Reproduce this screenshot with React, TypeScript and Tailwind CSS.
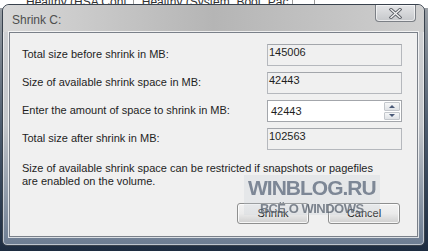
import React from 'react';

const font = { fontFamily: '"Liberation Sans", Arial, sans-serif' };

const rows = [
  { label: 'Total size before shrink in MB:', value: '145006' },
  { label: 'Size of available shrink space in MB:', value: '42443' },
  { label: 'Enter the amount of space to shrink in MB:', value: '42443', editable: true },
  { label: 'Total size after shrink in MB:', value: '102563' },
];

const ReadOnlyBox = ({ value }: { value: string }) => (
  <div className="h-[22px] w-[135px] border border-[#b5b8bd] border-t-[#a3a6ab] bg-[#f0f0f0] px-[1px] leading-[15px]">
    {value}
  </div>
);

const SpinBox = ({ value }: { value: string }) => (
  <div className="flex h-[22px] w-[135px] border border-[#a3a6ab] bg-white">
    <div className="flex flex-1 items-center px-[3px]">{value}</div>
    <div className="flex w-[17px] flex-col gap-[1px] bg-white py-[1px] pr-[1px]">
      <div className="flex flex-1 items-center justify-center rounded-[1px] border border-[#c3c7cc] bg-gradient-to-b from-[#f6f7f8] to-[#dfe2e6]">
        <div className="h-0 w-0 border-x-[3px] border-b-[3px] border-x-transparent border-b-[#4a5a78]" />
      </div>
      <div className="flex flex-1 items-center justify-center rounded-[1px] border border-[#c3c7cc] bg-gradient-to-b from-[#f6f7f8] to-[#dfe2e6]">
        <div className="h-0 w-0 border-x-[3px] border-t-[3px] border-x-transparent border-t-[#4a5a78]" />
      </div>
    </div>
  </div>
);

const DlgButton = ({ children }: { children: React.ReactNode }) => (
  <button className="flex h-[21px] w-[72px] items-center justify-center rounded-[3px] border border-[#8e8f8f] bg-gradient-to-b from-[#f2f2f2] via-[#ebebeb] to-[#cfcfcf] text-[11px] text-[#1e1e1e] shadow-[inset_0_0_0_1px_rgba(255,255,255,0.8)]">
    {children}
  </button>
);

export default function App() {
  return (
    <div
      className="relative h-[251px] w-[428px] overflow-hidden bg-gradient-to-b from-[#9ea3a8] via-[#4d5c6e] to-[#1d2c40]"
      style={font}
    >
      {/* disk management list behind the dialog */}
      <div className="flex h-[8px] items-end gap-[8px] overflow-hidden bg-white pl-[26px] text-[12px] leading-[14px] text-[#333]">
        <div className="h-[14px] shrink-0 translate-y-[1px] border-r border-[#9a9a9a] pr-[6px]">Healthy (HSA Cont</div>
        <div className="h-[14px] shrink-0 translate-y-[1px] border-r border-[#9a9a9a] pr-[4px]">Healthy (System, Boot, Pac</div>
        <div className="h-[14px] w-[14px] shrink-0 border-r border-[#9a9a9a]" />
      </div>

      {/* dialog window */}
      <div className="absolute left-[2px] top-[4px] flex h-[242px] w-[423px] flex-col rounded-t-[7px] rounded-b-[5px] border border-[#39424d] bg-gradient-to-b from-[#d3d4d6] via-[#c3c6ca] to-[#6d7d92] shadow-[inset_0_0_0_1px_rgba(255,255,255,0.55)]">
        <div className="flex h-[27px] shrink-0 items-start justify-between rounded-t-[7px] bg-gradient-to-r from-[#d8d8d8] via-[#b5b5b5] to-[#cfcfcf] pl-[9px] pr-[8px]">
          <span className="pt-[8px] text-[12px] leading-[14px] text-[#4e4e4e]">Shrink C:</span>
          <div className="flex h-[17px] w-[41px] items-center justify-center rounded-b-[4px] border border-t-0 border-[#7b7f85] bg-gradient-to-b from-[#e4e5e7] to-[#c6c8cb] shadow-[inset_0_0_0_1px_rgba(255,255,255,0.6)]">
            <svg width="13" height="11" viewBox="0 0 13 11">
              <path d="M2 1.5 L11 9.5 M11 1.5 L2 9.5" stroke="#5d6168" strokeWidth="3.2" strokeLinecap="square" />
              <path d="M2 1.5 L11 9.5 M11 1.5 L2 9.5" stroke="#f4f4f4" strokeWidth="1.3" strokeLinecap="square" />
            </svg>
          </div>
        </div>

        <div className="relative mx-[6px] mb-[8px] flex flex-1 flex-col border border-[#7a8089] bg-[#f0f0f0] pl-[12px] pr-[15px] pt-[11px] text-[11px] text-[#1e1e1e] shadow-[0_0_0_1px_rgba(255,255,255,0.75)]">
          <div className="flex flex-col gap-[6px]">
            {rows.map((r) => (
              <div key={r.label} className="flex items-center justify-between">
                <span className="-mt-[2px]">{r.label}</span>
                {r.editable ? <SpinBox value={r.value} /> : <ReadOnlyBox value={r.value} />}
              </div>
            ))}
          </div>

          <p className="mt-[12px] leading-[13px]">
            Size of available shrink space can be restricted if snapshots or pagefiles
            <br />
            are enabled on the volume.
          </p>

          <div className="mt-auto mb-[12px] flex justify-end gap-[19px] pr-[2px]">
            <DlgButton>Shrink</DlgButton>
            <DlgButton>Cancel</DlgButton>
          </div>

          {/* watermark */}
          <div className="pointer-events-none absolute left-[234px] top-[142px] flex flex-col items-center bg-[#c5cad2]/25 px-[4px] pt-[2px] font-bold leading-none blur-[0.4px]">
            <span className="text-[21px] tracking-[-1px] text-[#6a7686]/85">WINBLOG.RU</span>
            <span className="mt-[4px] text-[13px] tracking-[-0.5px] text-[#4f5966]/70">ВСЁ О WINDOWS</span>
          </div>
        </div>
      </div>
    </div>
  );
}
